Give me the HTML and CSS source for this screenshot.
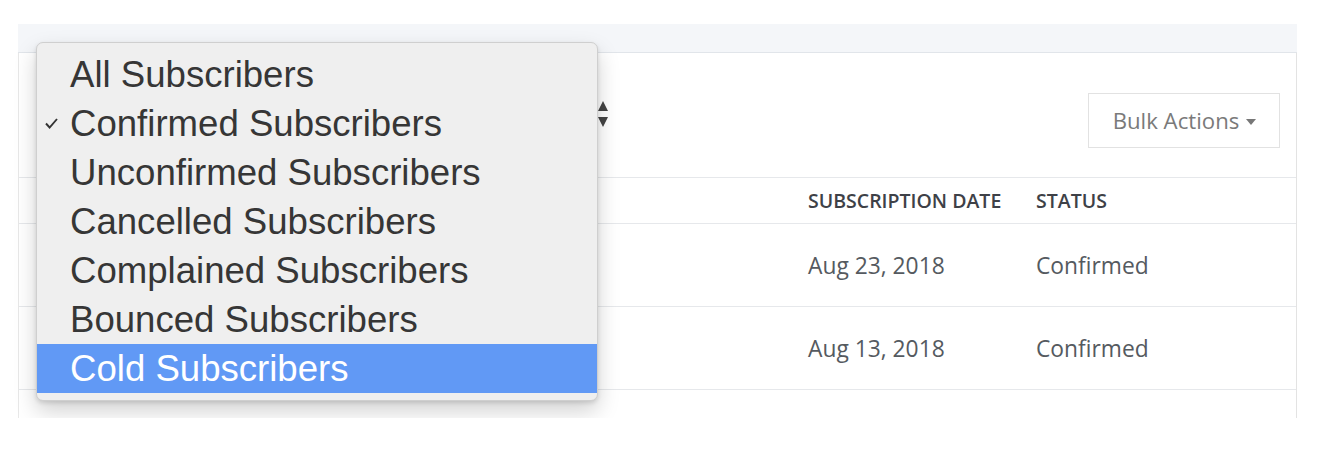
FILE: index.html
```html
<!DOCTYPE html>
<html>
<head>
<meta charset="utf-8">
<link rel="stylesheet" href="styles.css">
</head>
<body>
<div class="page">
  <div class="band"></div>
  <div class="panel">
    <div class="toolbar">
      <div class="select-stub">
        <svg class="updown" width="10" height="27" viewBox="0 0 10 27"><path d="M5 0 L10 10 L0 10 Z M0 16 L10 16 L5 26 Z" fill="#444"/></svg>
      </div>
      <div class="bulk">Bulk Actions <span class="caret"></span></div>
    </div>
    <div class="grid head">
      <div class="cell"></div>
      <div class="cell">SUBSCRIPTION DATE</div>
      <div class="cell">STATUS</div>
    </div>
    <div class="grid row">
      <div class="cell"></div>
      <div class="cell">Aug 23, 2018</div>
      <div class="cell">Confirmed</div>
    </div>
    <div class="grid row">
      <div class="cell"></div>
      <div class="cell">Aug 13, 2018</div>
      <div class="cell">Confirmed</div>
    </div>
    <div class="tail"></div>
  </div>

  <div class="menu">
    <div class="item">All Subscribers</div>
    <div class="item checked"><svg class="check" width="13" height="11" viewBox="0 0 13 11"><path d="M1 5.5 L4.6 9.5 L12 1" fill="none" stroke="#333" stroke-width="1.9"/></svg>Confirmed Subscribers</div>
    <div class="item">Unconfirmed Subscribers</div>
    <div class="item">Cancelled Subscribers</div>
    <div class="item">Complained Subscribers</div>
    <div class="item">Bounced Subscribers</div>
    <div class="item active">Cold Subscribers</div>
  </div>
</div>
</body>
</html>
```

FILE: styles.css
```css
html, body {
  margin: 0;
  padding: 0;
  background: #ffffff;
}
body {
  font-family: "Open Sans", "Liberation Sans", sans-serif;
  color: #555;
}
.page {
  position: relative;
  padding-top: 24px;
  padding-left: 18px;
  width: 1279px;
}
.band {
  height: 28px;
  background: #f4f6f9;
  border-bottom: 1px solid #e1e5ea;
}
.panel {
  border-left: 1px solid #e8e8e8;
  border-right: 1px solid #e3e3e3;
  background: #fff;
}
.toolbar {
  height: 124px;
  display: flex;
  justify-content: space-between;
  align-items: flex-start;
  padding-right: 16px;
  box-sizing: border-box;
}
.select-stub {
  width: 589px;
  padding-top: 48px;
  display: flex;
  justify-content: flex-end;
}
.bulk {
  margin-top: 40px;
  height: 55px;
  width: 192px;
  box-sizing: border-box;
  border: 1px solid #e2e2e2;
  display: flex;
  align-items: center;
  justify-content: center;
  gap: 7px;
  font-size: 22.2px;
  color: #7a7a7a;
  padding-left: 1px;
}
.caret {
  width: 0;
  height: 0;
  border-left: 5px solid transparent;
  border-right: 5px solid transparent;
  border-top: 6px solid #777;
  margin-top: 2px;
}
.grid {
  display: grid;
  grid-template-columns: 789px 228px 1fr;
  align-items: center;
  border-top: 1px solid #e6e8eb;
}
.head {
  height: 45px;
  font-size: 19.5px;
  font-weight: 600;
  color: #3e4147;
}
.row {
  height: 82px;
  font-size: 22.8px;
  color: #555a60;
}
.tail {
  height: 28px;
  border-top: 1px solid #e6e8eb;
}
.menu {
  position: absolute;
  left: 36px;
  top: 42px;
  width: 562px;
  box-sizing: border-box;
  padding: 7px 0;
  background: #efefef;
  border: 1px solid #cfcfcf;
  border-radius: 7px;
  box-shadow: 0 10px 22px rgba(0, 0, 0, 0.18), 0 2px 4px rgba(0, 0, 0, 0.12);
  font-family: "Liberation Sans", Arial, sans-serif;
  font-size: 36.6px;
  color: #363636;
}
.item {
  position: relative;
  height: 49px;
  line-height: 49px;
  padding-left: 33px;
  white-space: nowrap;
}
.check {
  position: absolute;
  left: 8px;
  top: 19px;
}
.item.active {
  background: #6199f5;
  color: #ffffff;
}
```
